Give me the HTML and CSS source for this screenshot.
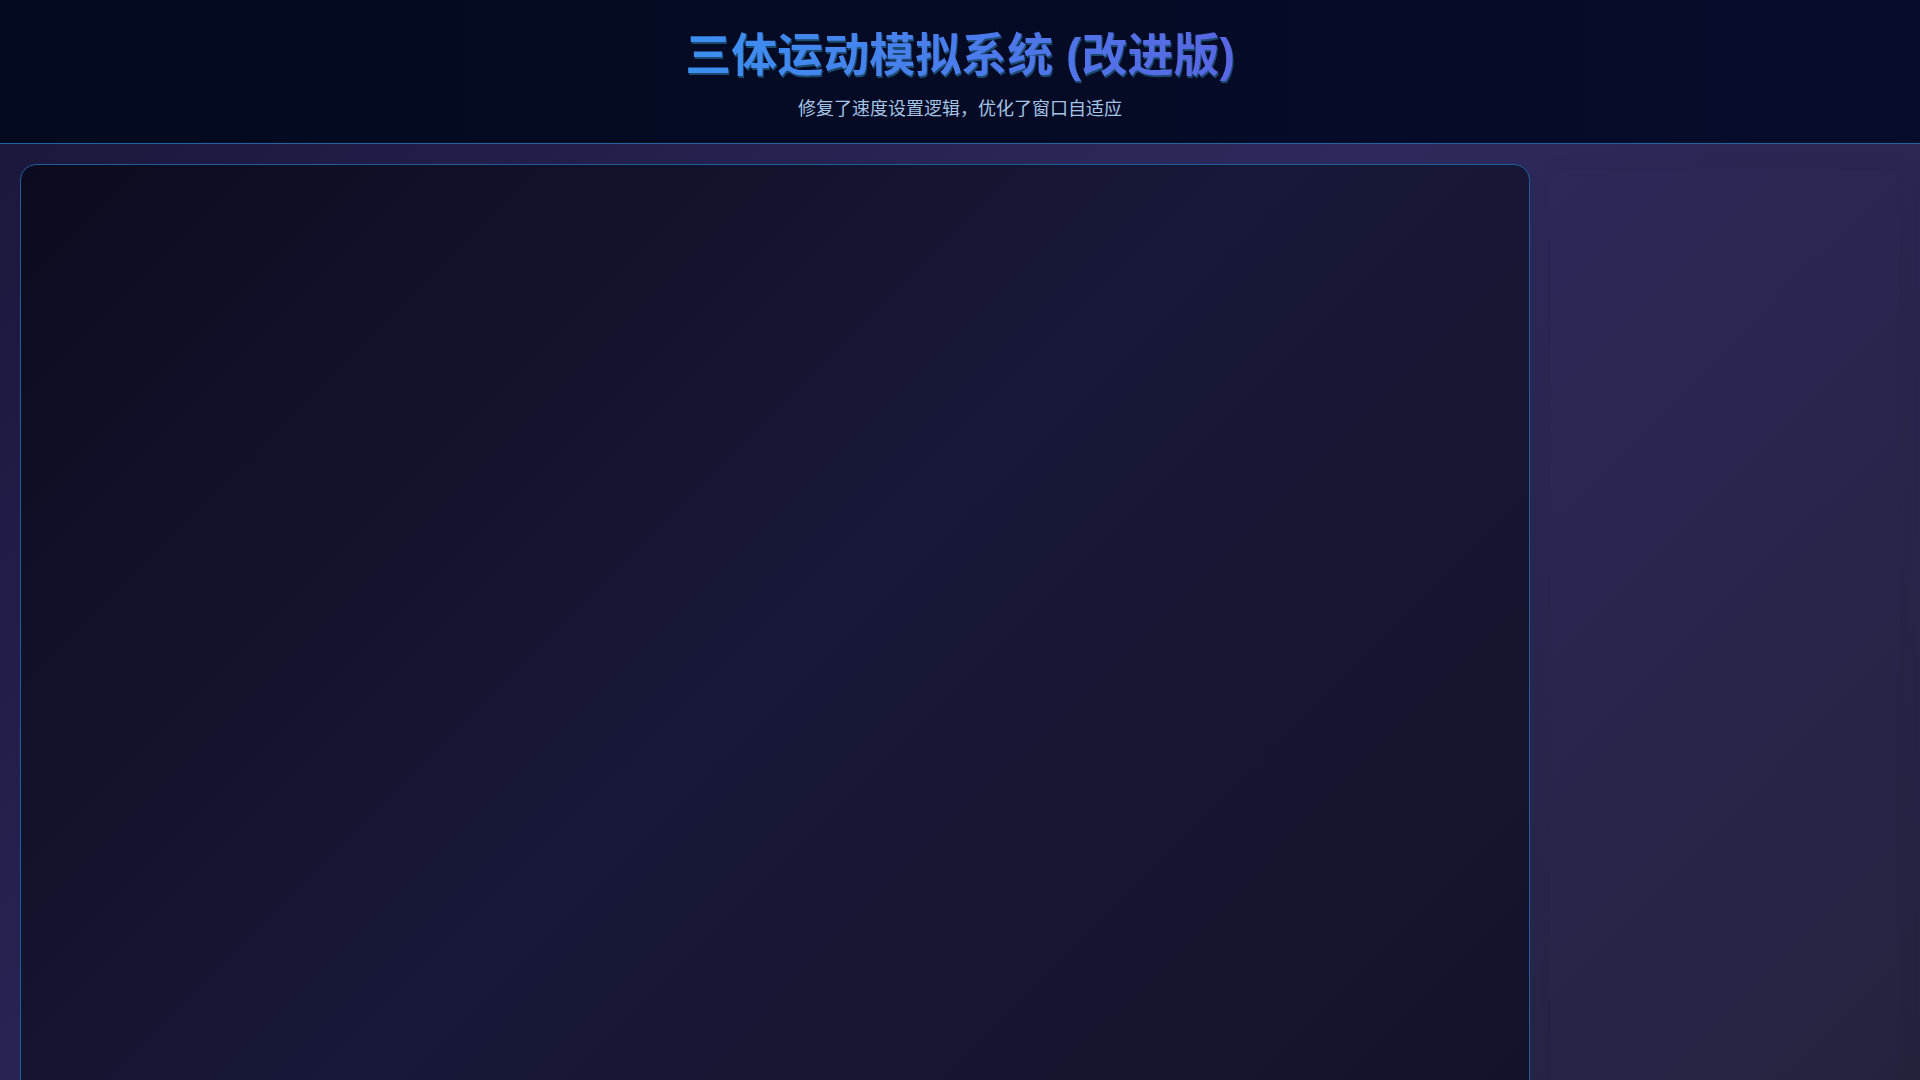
FILE: index.html
```html
<!DOCTYPE html>
<html lang="zh-CN">
<head>
<meta charset="utf-8">
<title>三体运动模拟系统 (改进版)</title>
<link rel="stylesheet" href="styles.css">
</head>
<body>
<header class="header">
  <h1 class="title">三体运动模拟系统 (改进版)</h1>
  <p class="subtitle">修复了速度设置逻辑，优化了窗口自适应</p>
</header>
<main class="main">
  <section class="canvas-wrap"></section>
  <aside class="sidebar"></aside>
</main>
</body>
</html>
```

FILE: styles.css
```css
* { box-sizing: border-box; }
html, body { margin: 0; padding: 0; }
body {
  min-height: 100vh;
  overflow: hidden;
  font-family: "Liberation Sans", "Noto Sans CJK SC", sans-serif;
  background: linear-gradient(135deg, #1a1538 0%, #2d295d 50%, #24233e 100%);
  background-attachment: fixed;
  color: #e0e6f0;
}
.header {
  height: 144px;
  padding-top: 27px;
  text-align: center;
  background: linear-gradient(90deg, #020a1f 0%, #050b25 50%, #070c2a 100%);
  border-bottom: 1px solid #2062a2;
}
.title {
  margin: 0;
  font-size: 46px;
  line-height: 56px;
  font-weight: 700;
  display: inline-block;
  background: linear-gradient(90deg, #3b90f0 0%, #4a7cec 50%, #5866e2 100%);
  -webkit-background-clip: text;
  background-clip: text;
  color: transparent;
  filter: drop-shadow(1px 2px 0.5px rgba(28, 78, 115, 0.95));
}
.subtitle {
  margin: 13px 0 0;
  font-size: 18px;
  line-height: 26px;
  color: #a6c4e6;
}
.main {
  display: flex;
  gap: 20px;
  padding: 20px;
}
.canvas-wrap {
  flex: 1;
  height: 960px;
  border: 1px solid #1f5d9c;
  border-radius: 16px;
  background: linear-gradient(135deg, #0b0b1f 0%, #181838 50%, #12132a 100%);
}
.sidebar {
  width: 350px;
  height: 940px;
  margin-top: 6px;
  border-radius: 16px;
  background: rgba(255, 255, 255, 0.005);
  box-shadow: 0 0 24px rgba(10, 10, 30, 0.06);
}
```
